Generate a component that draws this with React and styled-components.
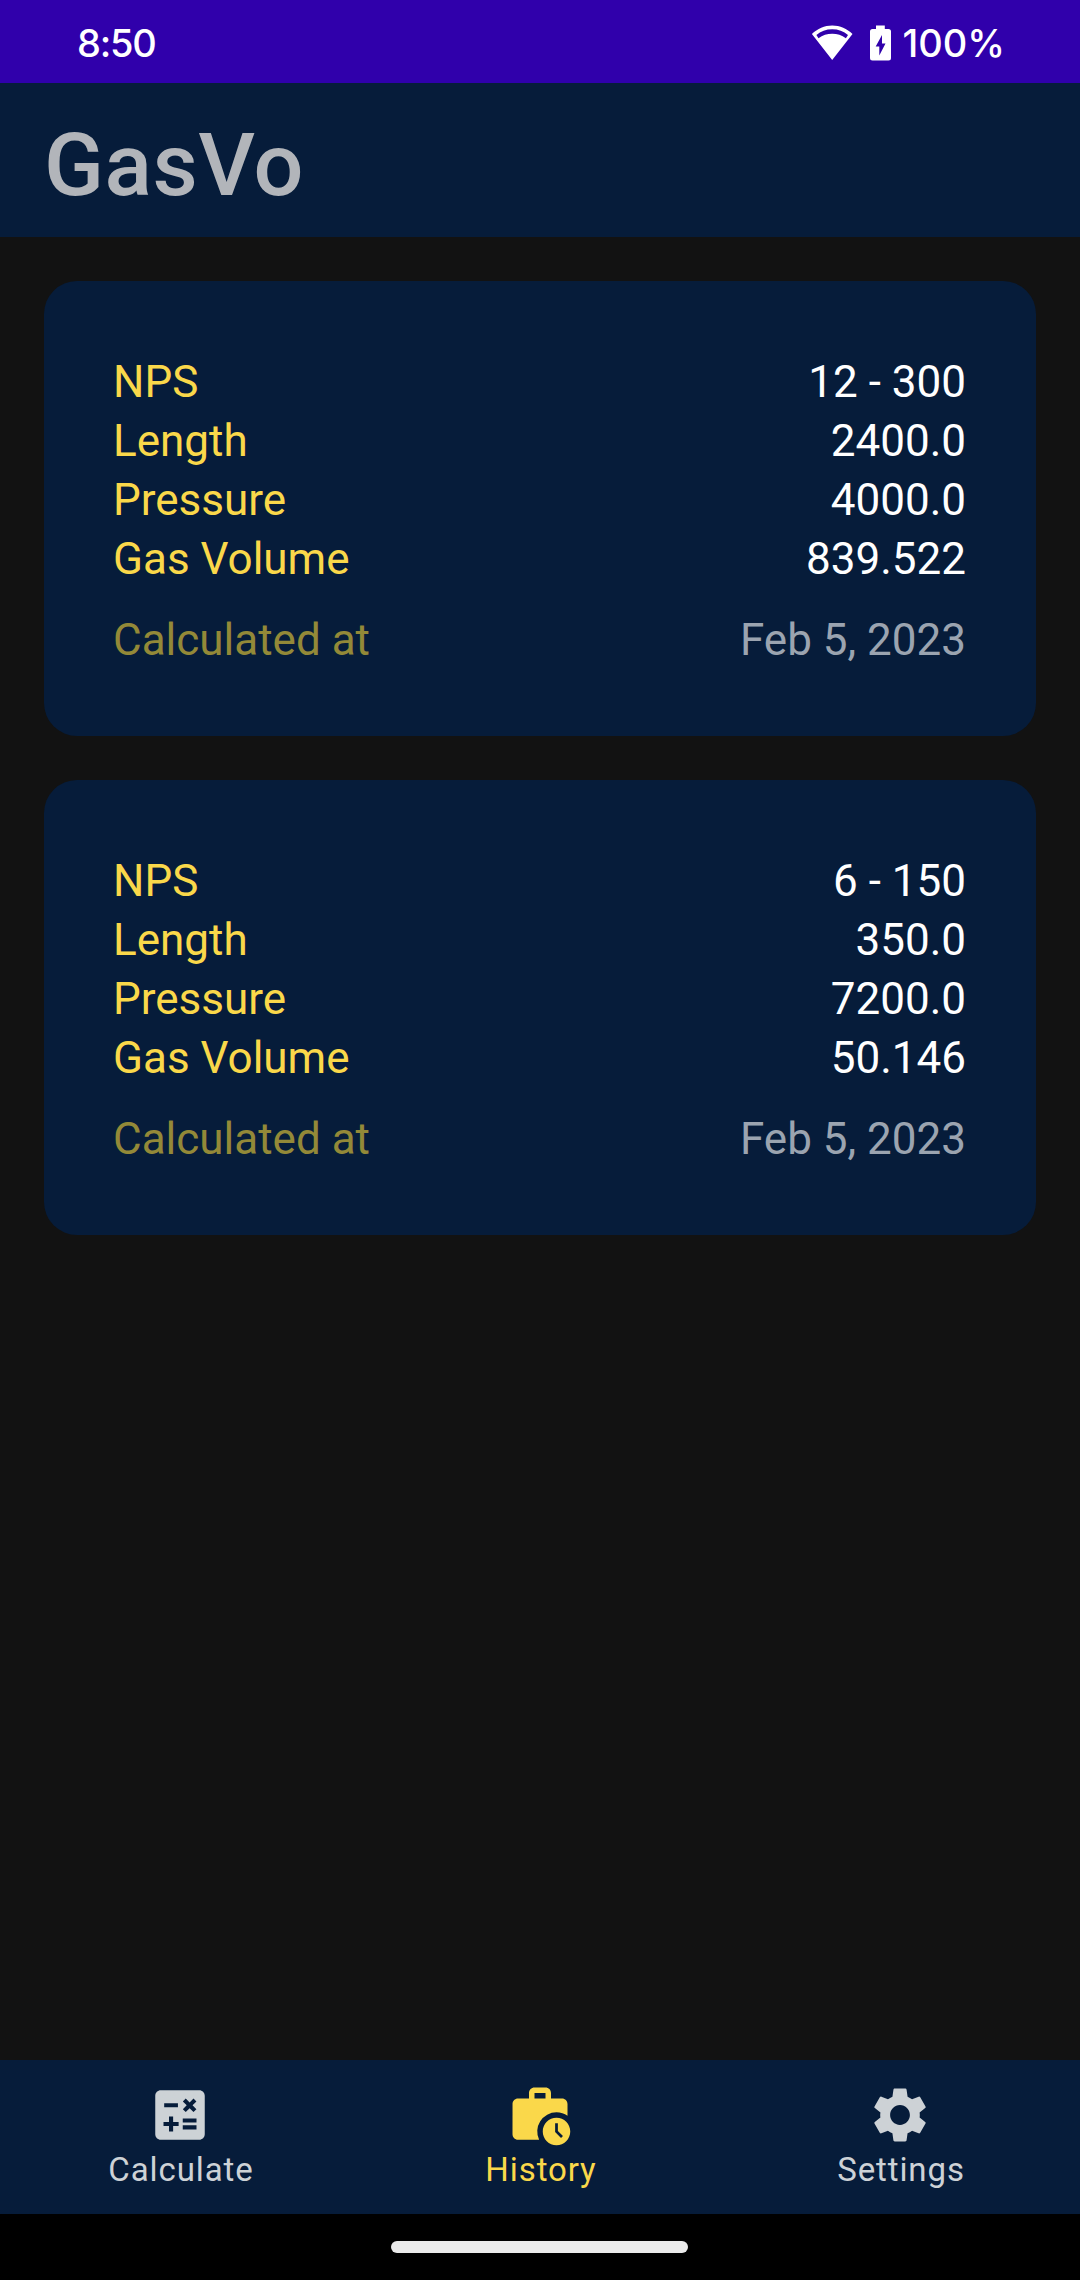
import React from "react";
import styled, { createGlobalStyle } from "styled-components";
import { MdCalculate, MdWorkHistory, MdSettings } from "react-icons/md";

const GlobalStyle = createGlobalStyle`
  * { box-sizing: border-box; }
  body {
    margin: 0;
    background: #121212;
    font-family: Roboto, "Liberation Sans", sans-serif;
  }
`;

const Screen = styled.div`
  display: flex;
  flex-direction: column;
  width: 1080px;
  height: 2280px;
  background: #121212;
`;

const StatusBar = styled.header`
  display: flex;
  align-items: center;
  justify-content: space-between;
  height: 83px;
  padding: 3px 75px 0 77px;
  background: #3000ab;
  color: #fff;
`;

const StatusText = styled.span`
  font-family: Inter, Roboto, sans-serif;
  font-size: 38px;
  font-weight: 500;
  line-height: 46px;
  letter-spacing: ${(p) => p.$spacing};
`;

const StatusIcons = styled.div`
  display: flex;
  align-items: center;
`;

const WifiIcon = styled.svg`
  width: 42px;
  height: 36px;
  margin: 0 16px 1px 0;
`;

const BatteryIcon = styled.svg`
  width: 22px;
  height: 36px;
  margin-right: 11px;
`;

const AppBar = styled.div`
  display: flex;
  align-items: center;
  height: 154px;
  padding: 10px 44px 0;
  background: #061c3a;
`;

const Title = styled.h1`
  margin: 0;
  color: #b2b5ba;
  font-size: 88px;
  font-weight: 500;
  line-height: 104px;
  letter-spacing: 0.5px;
`;

const History = styled.main`
  display: flex;
  flex: 1;
  flex-direction: column;
  gap: 44px;
  padding: 44px;
`;

const Card = styled.section`
  display: flex;
  flex-direction: column;
  height: 455px;
  padding: 72px 70px 0 69px;
  border-radius: 33px;
  background: #061c3a;
`;

const Row = styled.div`
  display: flex;
  justify-content: space-between;
  margin-top: ${(p) => (p.$muted ? "22px" : "0")};
  font-size: 44px;
  line-height: 59px;
`;

const Label = styled.span`
  color: ${(p) => (p.$muted ? "#938938" : "#fad84a")};
`;

const Value = styled.span`
  color: ${(p) => (p.$muted ? "#9ba4b0" : "#fff")};
`;

const NavBar = styled.nav`
  display: flex;
  height: 154px;
  background: #061c3a;
`;

const NavItem = styled.div`
  display: flex;
  flex: 1;
  flex-direction: column;
  align-items: center;
  padding-top: 22px;
  color: ${(p) => (p.$active ? "#fad84a" : "#cdd2d6")};
  font-size: 33px;
  line-height: 40px;
  letter-spacing: 0.9px;

  svg {
    width: 66px;
    height: 66px;
  }
`;

const NavLabel = styled.span`
  margin: 2px 0 0 2px;
`;

const GestureBar = styled.footer`
  display: flex;
  justify-content: center;
  height: 66px;
  padding: 27px 1px 0 0;
  background: #000;
`;

const GesturePill = styled.div`
  width: 297px;
  height: 12px;
  border-radius: 6px;
  background: #ebebeb;
`;

const records = [
  {
    id: 1,
    date: "Feb 5, 2023",
    fields: [
      ["NPS", "12 - 300"],
      ["Length", "2400.0"],
      ["Pressure", "4000.0"],
      ["Gas Volume", "839.522"],
    ],
  },
  {
    id: 2,
    date: "Feb 5, 2023",
    fields: [
      ["NPS", "6 - 150"],
      ["Length", "350.0"],
      ["Pressure", "7200.0"],
      ["Gas Volume", "50.146"],
    ],
  },
];

const tabs = [
  { name: "Calculate", Icon: MdCalculate },
  { name: "History", Icon: MdWorkHistory, active: true },
  { name: "Settings", Icon: MdSettings },
];

export default function App() {
  return (
    <>
      <GlobalStyle />
      <Screen>
        <StatusBar>
          <StatusText $spacing="-1.2px">8:50</StatusText>
          <StatusIcons>
            <WifiIcon viewBox="0 0 42 36">
              <path
                fill="#fff"
                fillRule="evenodd"
                d="M21.200 .5C13.500 .5 6.500 3.600 .9 9L21.200 35 41.500 9C36 3.600 29 .5 21.200 .5ZM21.200 4.300C27.200 4.300 32.700 6.300 37 10L34.900 13.300C30.800 10 26.200 8.700 21.200 8.700S11.600 10 7.500 13.300L5.400 10C9.700 6.300 15.200 4.300 21.200 4.300Z"
              />
            </WifiIcon>
            <BatteryIcon viewBox="0 0 22 36">
              <path
                fill="#fff"
                fillRule="evenodd"
                d="M7 .5H15.800V4H19.500Q22 4 22 6.500V33Q22 35.500 19.500 35.500H3.500Q1 35.500 1 33V6.500Q1 4 3.500 4H7ZM13 10L6.700 21.500H10.300V30.500L16.500 18.500H13Z"
              />
            </BatteryIcon>
            <StatusText $spacing="0px">100%</StatusText>
          </StatusIcons>
        </StatusBar>
        <AppBar>
          <Title>GasVo</Title>
        </AppBar>
        <History>
          {records.map((record) => (
            <Card key={record.id}>
              {record.fields.map(([label, value]) => (
                <Row key={label}>
                  <Label>{label}</Label>
                  <Value>{value}</Value>
                </Row>
              ))}
              <Row $muted>
                <Label $muted>Calculated at</Label>
                <Value $muted>{record.date}</Value>
              </Row>
            </Card>
          ))}
        </History>
        <NavBar>
          {tabs.map(({ name, Icon, active }) => (
            <NavItem key={name} $active={active}>
              <Icon />
              <NavLabel>{name}</NavLabel>
            </NavItem>
          ))}
        </NavBar>
        <GestureBar>
          <GesturePill />
        </GestureBar>
      </Screen>
    </>
  );
}
